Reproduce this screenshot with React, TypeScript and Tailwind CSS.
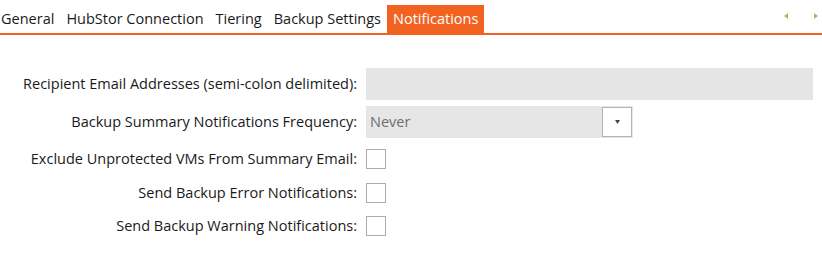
const tabs = ["General", "HubStor Connection", "Tiering", "Backup Settings", "Notifications"];

function Checkbox() {
  return <div className="w-5 h-5 border border-[#acacac] bg-white" />;
}

function Row({ label, children }: { label: string; children: React.ReactNode }) {
  return (
    <div className="flex items-center">
      <div className="w-[358px] shrink-0 pr-[1px] text-right">{label}</div>
      <div className="flex-1 pl-[8px]">{children}</div>
    </div>
  );
}

export default function App() {
  return (
    <div
      className="w-[822px] h-[263px] bg-white text-[14.5px] leading-[20px] text-[#1a1a1a] overflow-hidden"
      style={{ fontFamily: '"Segoe UI", "Open Sans", sans-serif' }}
    >
      <div className="flex items-end h-[33px] border-b-2 border-[#f26322] box-content">
        <div className="flex items-end h-full">
          {tabs.map((t) => {
            const active = t === "Notifications";
            return (
              <div
                key={t}
                className={
                  active
                    ? "h-[28px] flex items-center px-[6px] bg-[#f26322] text-white"
                    : "h-[28px] flex items-center px-[6px] first:pl-[1px]"
                }
              >
                {t}
              </div>
            );
          })}
        </div>
        <div className="ml-auto flex items-center gap-[26px] h-full pr-[4px] pb-[2px]">
          <svg width="4" height="6" viewBox="0 0 4 6">
            <path d="M4 0 L0 3 L4 6 Z" fill="#a7b76a" />
          </svg>
          <svg width="4" height="6" viewBox="0 0 4 6">
            <path d="M0 0 L4 3 L0 6 Z" fill="#a7b76a" />
          </svg>
        </div>
      </div>

      <div className="flex flex-col pt-[33px] pr-[9px]">
        <Row label="Recipient Email Addresses (semi-colon delimited):">
          <div className="h-[32px] bg-[#e5e5e5]" />
        </Row>
        <div className="h-[6px]" />
        <Row label="Backup Summary Notifications Frequency:">
          <div className="w-[267px] h-[32px] bg-[#e6e6e6] flex items-center justify-between pl-[4px] pr-[1px]">
            <span className="text-[#6e6e6e]">Never</span>
            <div className="w-[30px] h-[30px] bg-white border border-[#b3b3b3] flex items-center justify-center">
              <svg width="5" height="4" viewBox="0 0 5 4">
                <path d="M0 0 L5 0 L2.5 4 Z" fill="#444" />
              </svg>
            </div>
          </div>
        </Row>
        <div className="h-[11px]" />
        <Row label="Exclude Unprotected VMs From Summary Email:">
          <Checkbox />
        </Row>
        <div className="h-[14px]" />
        <Row label="Send Backup Error Notifications:">
          <Checkbox />
        </Row>
        <div className="h-[13px]" />
        <Row label="Send Backup Warning Notifications:">
          <Checkbox />
        </Row>
      </div>
    </div>
  );
}
